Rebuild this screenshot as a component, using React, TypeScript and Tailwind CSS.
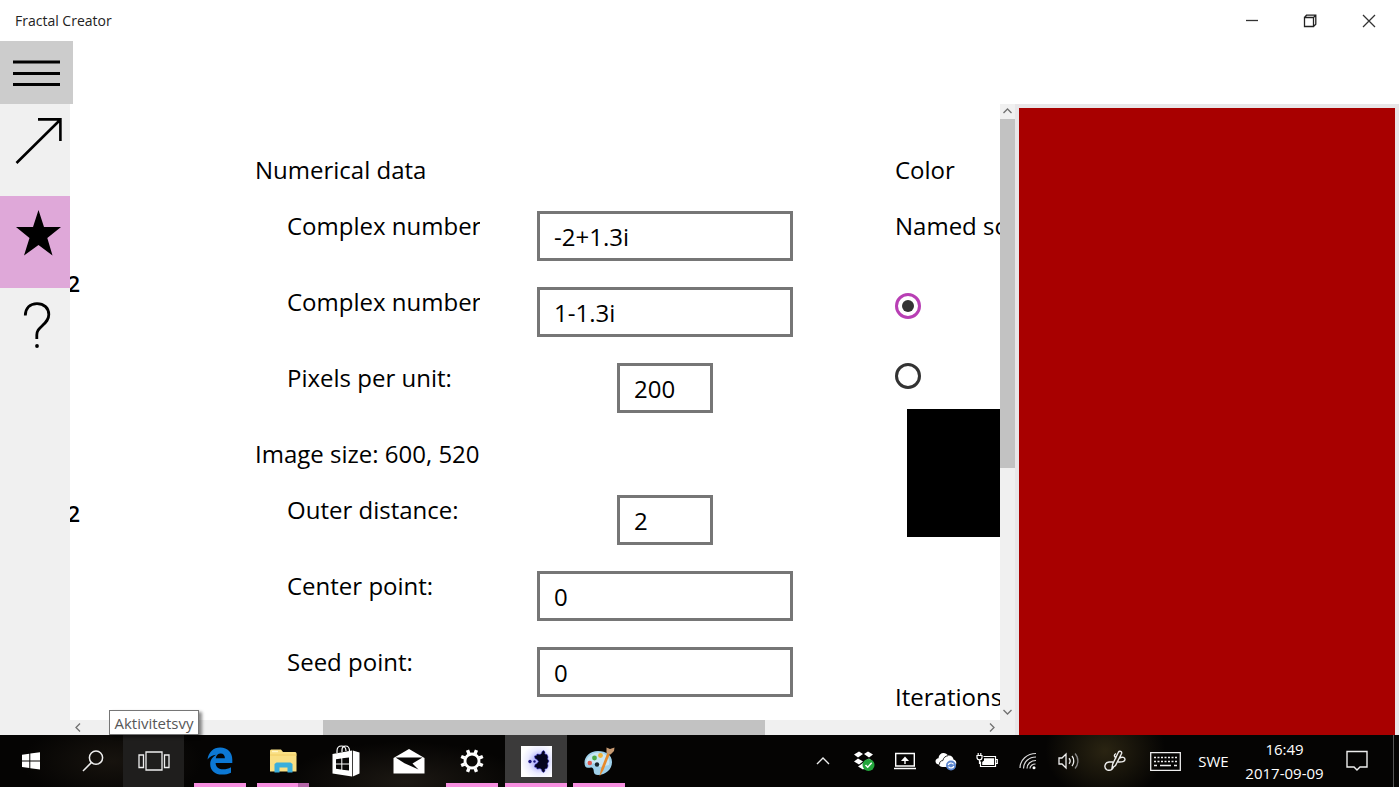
import { useState } from 'react'
import type { ReactNode } from 'react'

interface FieldProps {
  id: string
  label: string
  value: string
  small?: boolean
}

function Field({ id, label, value, small = false }: FieldProps) {
  const [text, setText] = useState(value)
  return (
    <div className="flex items-start pl-8">
      <label htmlFor={id} className="w-[193px] mr-[57px] shrink-0 overflow-hidden whitespace-nowrap">
        {label}
      </label>
      <div className="w-64 shrink-0 flex justify-center">
        <input
          id={id}
          type="text"
          value={text}
          onChange={(e) => setText(e.target.value)}
          className={`${small ? 'w-24' : 'w-64'} h-[50px] border-[3px] border-[#767676] bg-white pl-[14px] outline-none`}
        />
      </div>
    </div>
  )
}

interface ColorRadioProps {
  label: string
  checked: boolean
  onSelect: () => void
}

function ColorRadio({ label, checked, onSelect }: ColorRadioProps) {
  return (
    <input
      type="radio"
      name="color-source"
      aria-label={label}
      checked={checked}
      onChange={onSelect}
      className="appearance-none w-[26px] h-[26px] shrink-0 rounded-full border-[3px] border-[#333333] checked:border-[#b83fb4] flex items-center justify-center checked:before:block checked:before:w-3 checked:before:h-3 checked:before:rounded-full checked:before:bg-[#333333]"
    />
  )
}

function Chevron({ d }: { d: string }) {
  return (
    <svg width="15" height="15" viewBox="0 0 15 15" fill="none" stroke="#707070" strokeWidth="1.3">
      <path d={d} />
    </svg>
  )
}

function VerticalScrollbar() {
  return (
    <div className="flex-1 flex flex-col bg-[#f0f0f0]">
      <button aria-label="Scroll up"><Chevron d="M3.5 9 7.5 5 11.5 9" /></button>
      <div className="flex-1 flex flex-col">
        <div className="grow-[349] basis-0 bg-[#c2c2c2]" />
        <div className="grow-[237] basis-0" />
      </div>
      <button aria-label="Scroll down"><Chevron d="M3.5 5 7.5 9 11.5 5" /></button>
    </div>
  )
}

function HorizontalScrollbar() {
  return (
    <div className="h-[15px] shrink-0 flex bg-[#f0f0f0]">
      <button aria-label="Scroll left"><Chevron d="M10 3.5 6 7.5 10 11.5" /></button>
      <div className="flex-1 flex">
        <div className="grow-[238] basis-0" />
        <div className="grow-[442] basis-0 bg-[#c2c2c2]" />
        <div className="grow-[220] basis-0" />
      </div>
      <button aria-label="Scroll right"><Chevron d="M5 3.5 9 7.5 5 11.5" /></button>
    </div>
  )
}

function TitleBar() {
  return (
    <header className="h-[41px] shrink-0 flex items-center justify-between pl-[15px]">
      <h1 className="text-sm leading-5 text-[#222222]">Fractal Creator</h1>
      <div className="flex h-full">
        <button aria-label="Minimize" className="w-[58px] flex items-center justify-center">
          <svg width="14" height="14" viewBox="0 0 14 14" stroke="#333" strokeWidth="1.3"><path d="M1 6.5H13" /></svg>
        </button>
        <button aria-label="Restore" className="w-[58px] flex items-center justify-center">
          <svg width="14" height="14" viewBox="0 0 14 14" fill="none" stroke="#222" strokeWidth="1.3">
            <path d="M1.5 3.5H10.5V12.5H1.5ZM1.5 3.5 3.5 1.2H12.8V10.3L10.5 12.5M10.5 3.5 12.8 1.2" />
          </svg>
        </button>
        <button aria-label="Close" className="w-[60px] flex items-center justify-center">
          <svg width="14" height="14" viewBox="0 0 14 14" stroke="#333" strokeWidth="1.3"><path d="M1 1 13 13M13 1 1 13" /></svg>
        </button>
      </div>
    </header>
  )
}

function SideBar() {
  return (
    <nav className="w-[70px] shrink-0 flex flex-col bg-[#f0f0f0]">
      <button aria-label="Open" className="h-[92px] pl-[15px] pt-[14px] flex items-start">
        <svg width="48" height="48" viewBox="0 0 48 48" fill="none" stroke="#000" strokeWidth="2.6">
          <path d="M1.5 45 45 2M23 1.4H45.4V23" />
        </svg>
      </button>
      <button aria-label="Favorites" aria-current="page" className="h-[92px] pl-[15px] pt-[14px] flex items-start bg-[#dfa8d9]">
        <svg width="48" height="48" viewBox="0 0 48 48">
          <path d="M23.5 0 29 17H46L32.3 28 37.5 45.5 23.5 35 9 45.5 14.5 28 1 17H18Z" />
        </svg>
      </button>
      <button aria-label="Help" className="h-[92px] pl-[15px] pt-[14px] flex items-start">
        <svg width="48" height="48" viewBox="0 0 48 48" fill="none" stroke="#000" strokeWidth="2.8">
          <path d="M10.3 13.5C10.5 6 15 1.6 22 1.6C29 1.6 33.8 6 33.8 12.6C33.8 18 30.5 20.7 27 24C23.5 27.3 21.8 29 21.8 33V37" />
          <circle cx="22" cy="44" r="1.9" fill="#000" stroke="none" />
        </svg>
      </button>
    </nav>
  )
}

function FractalForm() {
  const [source, setSource] = useState('named')
  return (
    <form className="flex-1 min-h-0 flex overflow-hidden text-2xl leading-[30px]">
      {/* right edge of the previous page, mostly scrolled away */}
      <div className="w-[10px] shrink-0 pt-[164px] flex flex-col gap-[200px] items-end overflow-hidden text-[22px] leading-[30px] font-semibold">
        <span>2</span>
        <span>2</span>
      </div>

      <section className="ml-[175px] pt-[51px] w-[538px] shrink-0 flex flex-col gap-[26px]">
        <h2>Numerical data</h2>
        <Field id="corner1" label="Complex number 1:" value="-2+1.3i" />
        <Field id="corner2" label="Complex number 2:" value="1-1.3i" />
        <Field id="ppu" label="Pixels per unit:" value="200" small />
        <h2>Image size: 600, 520</h2>
        <Field id="outer" label="Outer distance:" value="2" small />
        <Field id="center" label="Center point:" value="0" />
        <Field id="seed" label="Seed point:" value="0" />
      </section>

      <section className="ml-[102px] pt-[51px] shrink-0 flex flex-col whitespace-nowrap">
        <h2>Color</h2>
        <h3 className="mt-[26px] mb-[52px]">Named source</h3>
        <ColorRadio label="Named source" checked={source === 'named'} onSelect={() => setSource('named')} />
        <div className="h-11 shrink-0" />
        <ColorRadio label="Custom color" checked={source === 'custom'} onSelect={() => setSource('custom')} />
        <div className="mt-5 ml-3 w-64 h-32 shrink-0 bg-black" />
        <h2 className="mt-[145px]">Iterations</h2>
      </section>
    </form>
  )
}

interface TaskButtonProps {
  name: string
  running?: boolean
  active?: boolean
  stacked?: boolean
  children: ReactNode
}

function TaskButton({ name, running = false, active = false, stacked = false, children }: TaskButtonProps) {
  return (
    <button aria-label={name} className={`w-[62px] h-full flex flex-col items-center ${active ? 'bg-[#3b3a3a]' : ''}`}>
      <span className="flex-1 flex items-center pt-1">{children}</span>
      <span className={`h-1 flex ${active ? 'w-[62px]' : 'w-[52px]'}`}>
        {running && <span className="flex-1 bg-[#f78fe0]" />}
        {stacked && <span className="w-[11px] bg-[#b566a8]" />}
      </span>
    </button>
  )
}

function TrayButton({ name, wide = false, children }: { name: string; wide?: boolean; children: ReactNode }) {
  return (
    <button aria-label={name} className={`${wide ? 'w-[51px]' : 'w-[41px]'} h-full flex items-center justify-center`}>
      {children}
    </button>
  )
}

function TaskBar() {
  return (
    <footer className="h-[52px] shrink-0 flex justify-between text-white text-[15px] leading-6 bg-[#050403] bg-[radial-gradient(ellipse_90px_40px_at_8%_50%,#17130e,transparent),radial-gradient(ellipse_120px_40px_at_29%_90%,#1c1813,transparent),radial-gradient(ellipse_60px_50px_at_79%_30%,#2a2412,transparent)]">
      <div className="flex">
        <button aria-label="Start" className="w-[62px] flex items-center justify-center">
          <svg width="18" height="18" viewBox="0 0 18 18" fill="#fff">
            <path d="M0 2.8 7.3 1.8V8.4H0ZM8.3 1.6 18 .3V8.4H8.3ZM0 9.5H7.3V16.1L0 15.1ZM8.3 9.5H18V17.6L8.3 16.3Z" />
          </svg>
        </button>
        <button aria-label="Search" className="w-[61px] flex items-center justify-center">
          <svg width="22" height="22" viewBox="0 0 22 22" fill="none" stroke="#eee" strokeWidth="1.5">
            <circle cx="14" cy="7.7" r="6.6" />
            <path d="M9.3 12.6 1 21" />
          </svg>
        </button>
        <div className="relative w-[61px] flex">
          <button aria-label="Aktivitetsvy" aria-describedby="task-tip" className="flex-1 flex items-center justify-center bg-[#1f1e1d]">
            <svg width="32" height="20" viewBox="0 0 32 20" fill="none" stroke="#eee" strokeWidth="1.3">
              <path d="M8 1H24V19H8ZM5.5 4H1V16.5H5.5ZM26.5 4H31V16.5H26.5Z" />
            </svg>
          </button>
          <span
            id="task-tip"
            role="tooltip"
            className="absolute bottom-full -left-[14px] w-[90px] h-[25px] flex items-center justify-center border border-[#767676] bg-white text-[#575757] shadow-[3px_2px_3px_rgba(0,0,0,0.45)]"
          >
            Aktivitetsvy
          </span>
        </div>

        <div className="ml-[5px] flex gap-px">
          <TaskButton name="Microsoft Edge" running>
            <svg width="26" height="28" viewBox="0 0 26 28" fill="#0c78d4">
              <path d="M.5 12.5C1.6 5 6.4.5 13.2.5C20.8.5 25.3 5.5 25.3 12.7V16H8.6C8.8 20.3 12 22.3 16.2 22.3C19 22.3 21.5 21.6 24 20.2V25.7C21.5 27 18.5 27.6 15 27.6C8 27.6 3.2 23.6 3.2 17.2C3.2 12.9 5.6 9.6 9.3 7.7C5.4 8 2.6 9.7.5 12.5ZM8.8 11.2H17.9C17.8 8.1 16.3 6.5 13.7 6.5C11 6.5 9.2 8.3 8.8 11.2Z" />
            </svg>
          </TaskButton>
          <TaskButton name="File Explorer" running stacked>
            <svg width="28" height="24" viewBox="0 0 28 24">
              <path d="M1 1.5 2 .5H12L14 3H26.5L27.5 4V22.5H1Z" fill="#f9df83" />
              <path d="M3 2.5H9" stroke="#fff5c5" strokeWidth="1.4" />
              <path d="M1 6H27.5" stroke="#f1cc62" strokeWidth="1" />
              <path d="M5.5 23.5V15L7.5 13.5H21.5L23.5 15V23.5H18.5V18.5H10.5V23.5Z" fill="#3aaedc" />
            </svg>
          </TaskButton>
          <TaskButton name="Store">
            <svg width="28" height="32" viewBox="0 0 28 32" fill="#fff">
              <path d="M.5 9 20 5.5V31.5L.5 28.5ZM20.8 5.5 27.5 7.5V28.5L20.8 31.5Z" />
              <path d="M5 8V6C5 2.8 7 1 9.5 1C12 1 14 2.6 14 6M10 7V5C10 2.4 11.5 1 13.5 1C16 1 17.5 2.8 17.5 6" fill="none" stroke="#fff" strokeWidth="1.2" />
              <path d="M4 14.2 9.3 13.5V18.5H4ZM10.3 13.3 17 12.4V18.5H10.3ZM4 19.5H9.3V24.5L4 23.8ZM10.3 19.5H17V25.6L10.3 24.7Z" fill="#090807" />
            </svg>
          </TaskButton>
          <TaskButton name="Mail">
            <svg width="32" height="26" viewBox="0 0 32 26">
              <path d="M.5 10 16 1 31.5 10V25.5H.5Z" fill="#fff" />
              <path d="M2.5 9.5H29.5L19.5 15.5 25.5 21.5 11.5 15.2Z" fill="#090807" />
            </svg>
          </TaskButton>
          <TaskButton name="Settings" running>
            <svg width="24" height="24" viewBox="0 0 24 24" fill="none" stroke="#fff">
              <circle cx="12" cy="12" r="7" strokeWidth="2.8" />
              <g transform="rotate(22.5 12 12)" strokeWidth="3.4">
                <path d="M12 .3V4M12 20V23.7M.3 12H4M20 12H23.7M3.7 3.7 6.3 6.3M17.7 17.7 20.3 20.3M3.7 20.3 6.3 17.7M17.7 6.3 20.3 3.7" />
              </g>
            </svg>
          </TaskButton>
        </div>

        <div className="ml-[2px] flex gap-px">
          <TaskButton name="Fractal Creator" running active>
            <svg width="31" height="31" viewBox="0 0 31 31">
              <defs>
                <radialGradient id="halo" cx="0.6" cy="0.5" r="0.6">
                  <stop offset="0.3" stopColor="#b9b8fb" />
                  <stop offset="0.65" stopColor="#ececff" />
                  <stop offset="1" stopColor="#ffffff" />
                </radialGradient>
              </defs>
              <path d="M0 0H31V31H0Z" fill="url(#halo)" />
              <path d="M16 13.5 14 12.5 13.5 10 15.5 9.5 16 8 19 8.5 20.5 7.5 21 5.5 22.8 4.5 24 6 23.8 8 26 8.5 27 11 26.5 13 28 15 26.5 17.5 27 20 26 22.5 23.8 23 24 25 22.8 26.5 21 25.5 20.5 23.5 19 22.5 16 23 15.5 21.5 13.5 21 14 18.5 16 17.5 17.5 15.5Z" fill="#05041f" stroke="#2f2bc0" strokeWidth="0.5" />
              <circle cx="9" cy="15.5" r="1.7" fill="#1a1580" />
              <circle cx="13.5" cy="15.5" r="1.2" fill="#1a1580" />
            </svg>
          </TaskButton>
          <TaskButton name="Paint" running>
            <svg width="32" height="32" viewBox="0 0 32 32">
              <path d="M15 6C7 6 1.5 11.5 1.5 17.5C1.5 21 2.5 22.8 5 22.8C8 22.8 8.5 21.5 10 23.5C11.5 25.5 9.5 30 15 30C22.5 30 29 24.5 29 17C29 10 23 6 15 6Z" fill="#9fd0ea" />
              <path d="M15 7.5C9 7.5 3.5 12 3 17.5L5 20 11 18 17 22 26 20C28 13 22 7.5 15 7.5Z" fill="#c9e7f5" />
              <circle cx="6.8" cy="18" r="2.3" fill="#e05a50" />
              <circle cx="11.5" cy="13" r="2.4" fill="#4dab47" />
              <circle cx="17.5" cy="10.5" r="2.4" fill="#f0b43c" />
              <circle cx="14" cy="19.5" r="2.2" fill="#17242c" />
              <path d="M16.5 31.5 18 24 24.5 7.5 27 8.5 20.5 25Z" fill="#e78a2b" />
              <path d="M23.5 8 23.5 2.5 27 4 31.5 2.5 31 6 27.5 9.5Z" fill="#c79a72" />
            </svg>
          </TaskButton>
        </div>
      </div>

      <div className="flex items-center">
        <TrayButton name="Show hidden icons">
          <svg width="14" height="8" viewBox="0 0 14 8" fill="none" stroke="#eee" strokeWidth="1.4"><path d="M1 7 7 1 13 7" /></svg>
        </TrayButton>
        <TrayButton name="Dropbox">
          <svg width="22" height="22" viewBox="0 0 22 22" fill="#fff">
            <path d="M1 4.5 6 1.5 10 4 5 7.5ZM11 4 15 1.5 20 4.5 16 7.5ZM1 11.5 5 8.5 10 11.5 6 14.5ZM11 11.5 16 8.5 20 11.5 15 14.5ZM5 16.5 10 13 15 16.5 10 19.5Z" />
            <circle cx="15.5" cy="15" r="6" fill="#23a63c" />
            <path d="M12.5 15 14.7 17.3 18.7 12.8" fill="none" stroke="#fff" strokeWidth="1.4" />
          </svg>
        </TrayButton>
        <TrayButton name="Project">
          <svg width="22" height="18" viewBox="0 0 22 18" fill="none" stroke="#fff" strokeWidth="1.4">
            <path d="M1.7 1.5H20.3V14H1.7ZM0 16.5H22M11 12V6" />
            <path d="M7 9 11 4.5 15 9Z" fill="#fff" stroke="none" />
          </svg>
        </TrayButton>
        <TrayButton name="OneDrive">
          <svg width="22" height="20" viewBox="0 0 22 20">
            <path d="M4 13.5C1.7 13.3.5 12 .5 10.3C.5 8.5 1.8 7.3 3.5 7.2C3.7 4 5.8 2 8.6 2C10.5 2 12 3 13 4.5C16 4 18.3 5.8 18.5 8.5C20.3 9 21.3 10.2 21.3 12C21.3 14.5 19.8 16 17.5 16H7.5C5.5 16 4.2 15 4 13.5Z" fill="#fff" />
            <path d="M4.5 13.5C4.3 11 5.8 9.6 7.8 9.6C8.5 6.5 10.5 5 13 4.7" fill="none" stroke="#222" strokeWidth="1" />
            <circle cx="16" cy="14.5" r="5" fill="#5c86cf" />
            <path d="M13.2 14C13.7 11.8 17 11.2 18.5 13.3M18.8 15C18.3 17.2 15 17.8 13.5 15.7" fill="none" stroke="#fff" strokeWidth="1.2" />
          </svg>
        </TrayButton>
        <TrayButton name="Battery">
          <svg width="22" height="16" viewBox="0 0 22 16" fill="none" stroke="#fff" strokeWidth="1.2">
            <path d="M7.5 3.5H19.5V13.5H4.5V8.5M20 6.5H21.3V10.5H20" />
            <path d="M8 5.2H18V12H6.2V9L8 7.5Z" fill="#fff" stroke="none" />
            <path d="M1 2.5H6V4.5C6 6 5 6.8 3.5 6.8C2 6.8 1 6 1 4.5ZM2.2 0V2.5M4.8 0V2.5M3.5 7V11" />
          </svg>
        </TrayButton>
        <TrayButton name="Wi-Fi">
          <svg width="18" height="18" viewBox="0 0 18 18" fill="none" stroke="#ddd" strokeWidth="1.2">
            <path d="M1 16C1 8 8 1.5 17 1.5M4.5 16.5C4.5 10 10 5 17 5M8 16.5C8 12 12 8.5 17 8.5M11 16.5C11 14 13.5 12 16.5 12" />
            <circle cx="15" cy="15.7" r="1.5" fill="#fff" stroke="none" />
          </svg>
        </TrayButton>
        <TrayButton name="Volume">
          <svg width="21" height="18" viewBox="0 0 21 18" fill="none" stroke="#eee" strokeWidth="1.3">
            <path d="M1 6H4L8 2V16L4 12H1ZM11 6.3C12.3 7.8 12.3 10.2 11 11.7M14 4C16.3 6.7 16.3 11.3 14 14" />
            <path d="M17 1.5C20.8 5.5 20.8 12.5 17 16.5" stroke="#888" />
          </svg>
        </TrayButton>
        <TrayButton name="Windows Ink" wide>
          <svg width="22" height="22" viewBox="0 0 22 22" fill="none" stroke="#eee" strokeWidth="1.4">
            <path d="M8 18 8.7 14 14.5 2C15.5.5 18.2 1.5 17.6 3.5L11.5 15.5ZM9 12H5C.5 12.5-.5 18 3 19.8C6 21 8.5 19.5 10 16.5M12.5 8C10 7 9.5 5 12 3.5M15.5 8C18.5 6.5 21 7.5 21 9.5C21 11.5 18 12.3 14 12" />
          </svg>
        </TrayButton>
        <TrayButton name="Touch keyboard" wide>
          <svg width="31" height="19" viewBox="0 0 31 19" fill="none" stroke="#eee" strokeWidth="1.3">
            <path d="M.7.7H30.3V18.3H.7Z" />
            <path d="M4 5.5H27M4 9.5H27" strokeDasharray="2 1.5" />
            <path d="M4 13.5H7M10 13.5H21M24 13.5H27" />
          </svg>
        </TrayButton>
        <button className="w-[45px] h-full">SWE</button>
        <button className="w-[97px] h-full flex flex-col items-center justify-center">
          <time dateTime="2017-09-09T16:49">16:49</time>
          <span>2017-09-09</span>
        </button>
        <button aria-label="Notifications" className="w-12 h-full flex items-center justify-center">
          <svg width="22" height="22" viewBox="0 0 22 22" fill="none" stroke="#eee" strokeWidth="1.4">
            <path d="M1 1.5H21V17H14L11 20 8 17H1Z" />
          </svg>
        </button>
        <button aria-label="Show desktop" className="ml-3 w-[6px] h-full border-l border-[#555555]" />
      </div>
    </footer>
  )
}

export default function App() {
  return (
    <div className="h-screen flex flex-col overflow-hidden bg-white text-black font-['Segoe_UI','Open_Sans',sans-serif]">
      <TitleBar />
      <div className="h-[63px] shrink-0 flex">
        <button aria-label="Menu" className="w-[73px] flex items-center pl-[13px] bg-[#cccccc]">
          <svg width="47" height="30" viewBox="0 0 47 30" stroke="#000" strokeWidth="3">
            <path d="M0 4H47M0 15.5H47M0 26.5H47" />
          </svg>
        </button>
      </div>
      <div className="flex-1 min-h-0 flex">
        <SideBar />
        <main className="flex-1 min-w-0 flex flex-col">
          <FractalForm />
          <HorizontalScrollbar />
        </main>
        <div className="w-[15px] shrink-0 flex flex-col">
          <VerticalScrollbar />
          <div className="h-[15px] bg-[#f0f0f0]" />
        </div>
        <section aria-label="Fractal image" className="w-[384px] shrink-0 border-4 border-b-0 border-[#e8e6e8] bg-[#a80000]" />
      </div>
      <TaskBar />
    </div>
  )
}
